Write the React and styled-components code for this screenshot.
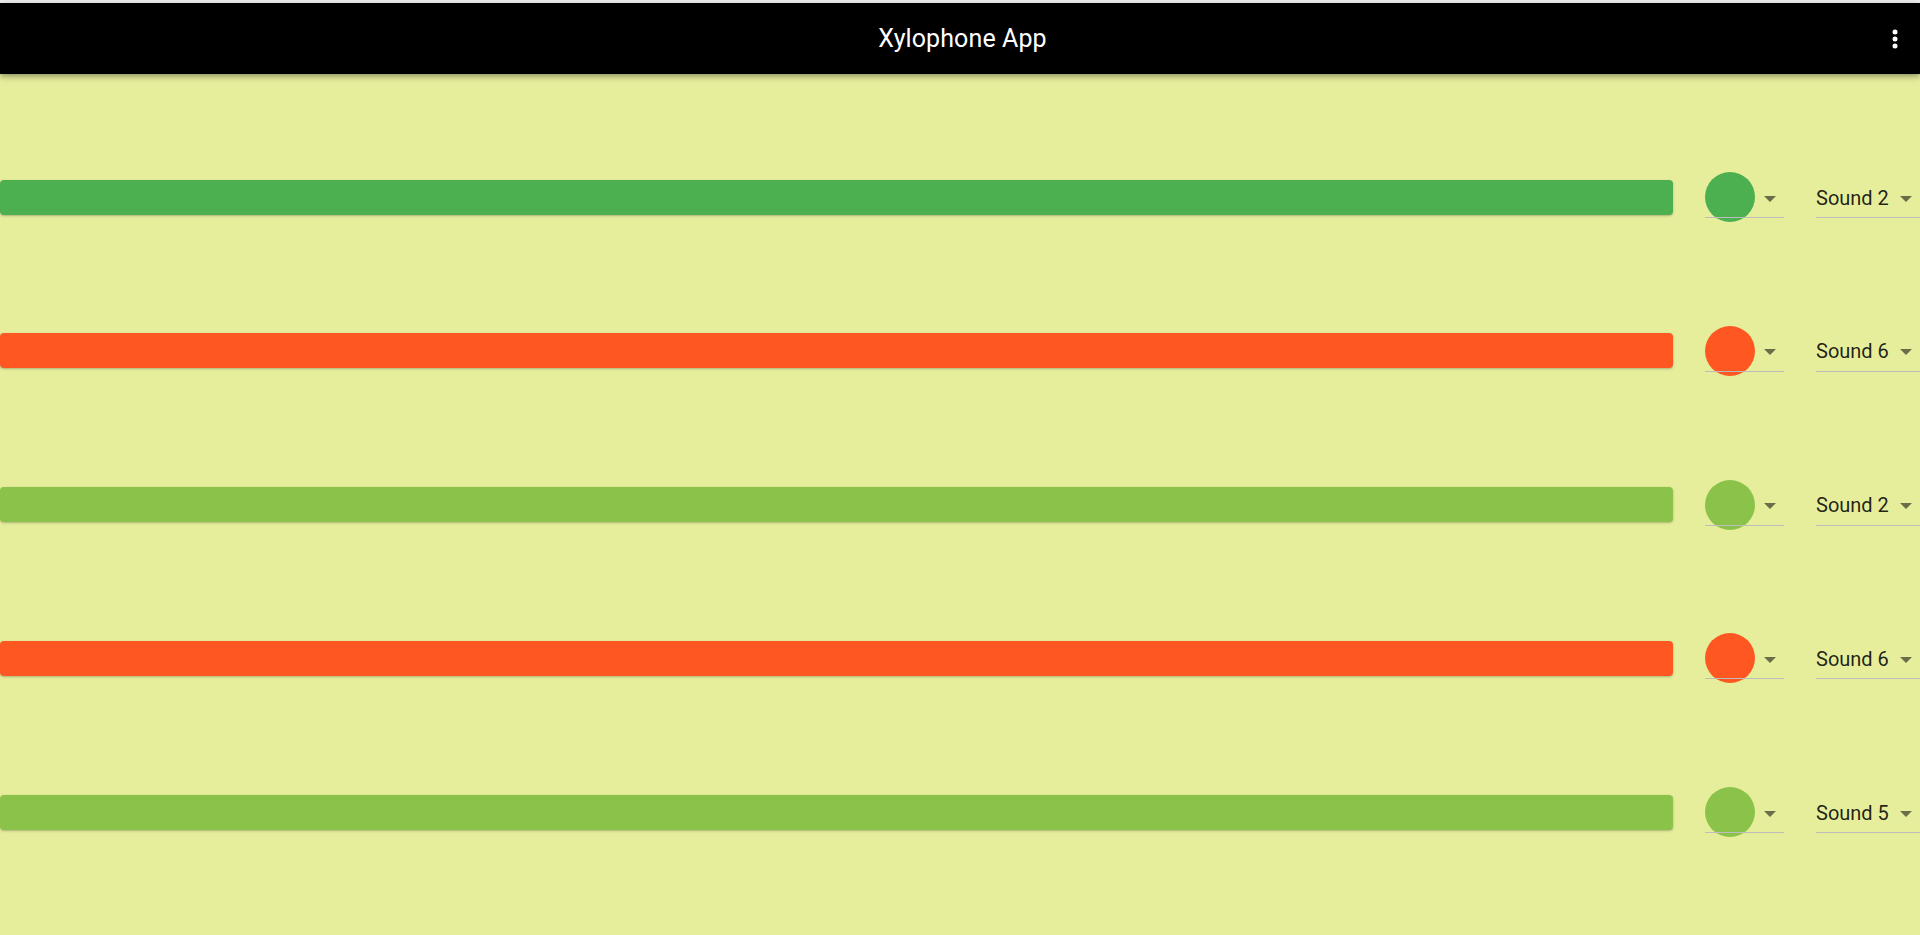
import React from "react";
import styled, { createGlobalStyle } from "styled-components";

const GlobalStyle = createGlobalStyle`
  html, body {
    margin: 0;
    padding: 0;
    background: #e6ee9c;
    overflow: hidden;
    font-family: Roboto, "Liberation Sans", Arial, sans-serif;
  }
  * { box-sizing: border-box; }
`;

const Page = styled.div`
  width: 100vw;
  height: 100vh;
  display: flex;
  flex-direction: column;
`;

const TopStrip = styled.div`
  height: 3px;
  background: #ededed;
  flex: none;
`;

const AppBar = styled.header`
  height: 71px;
  flex: none;
  background: #000;
  color: #fff;
  display: grid;
  grid-template-columns: 1fr auto 1fr;
  align-items: center;
  padding: 0 13px 0 18px;
  box-shadow: 0 2px 4px -1px rgba(0, 0, 0, 0.2), 0 4px 5px 0 rgba(0, 0, 0, 0.14),
    0 1px 10px 0 rgba(0, 0, 0, 0.12);
  position: relative;
  z-index: 2;
`;

const Title = styled.h1`
  grid-column: 2;
  margin: 0;
  font-size: 25px;
  font-weight: 400;
  letter-spacing: 0.1px;
`;

const MenuButton = styled.button`
  grid-column: 3;
  justify-self: end;
  width: 24px;
  height: 24px;
  padding: 0;
  border: 0;
  background: transparent;
  color: #fff;
  display: flex;
  align-items: center;
  justify-content: center;
  cursor: pointer;
`;

const Main = styled.main`
  flex: 1;
  display: flex;
  flex-direction: column;
  justify-content: center;
  gap: 103.75px;
`;

const Row = styled.div`
  display: grid;
  grid-template-columns: 1673px 79px 160px;
  column-gap: 32px;
  align-items: center;
  height: 50px;
`;

const Bar = styled.div`
  height: 35px;
  border-radius: 4px;
  background: ${(p) => p.$color};
  box-shadow: 0 1px 3px rgba(0, 0, 0, 0.18), 0 1px 1px rgba(0, 0, 0, 0.08);
`;

const SelectBase = styled.div`
  position: relative;
  height: 50px;
  display: flex;
  align-items: center;
  &::after {
    content: "";
    position: absolute;
    left: 0;
    right: 0;
    top: 45px;
    height: 1px;
    background: #bdbdbd;
    z-index: 1;
  }
`;

const Swatch = styled.span`
  width: 50px;
  height: 50px;
  border-radius: 50%;
  background: ${(p) => p.$color};
  flex: none;
`;

const Arrow = styled.span`
  width: 0;
  height: 0;
  border-left: 6px solid transparent;
  border-right: 6px solid transparent;
  border-top: 6px solid rgba(0, 0, 0, 0.54);
  margin-left: ${(p) => p.$gap}px;
  margin-top: 3px;
  flex: none;
`;

const SoundLabel = styled.span`
  font-size: 20px;
  line-height: 24px;
  color: rgba(0, 0, 0, 0.87);
  margin-top: 1px;
`;

const MoreIcon = () => (
  <svg width="24" height="24" viewBox="0 0 24 24" fill="currentColor">
    <circle cx="12" cy="5" r="2.5" />
    <circle cx="12" cy="12" r="2.5" />
    <circle cx="12" cy="19" r="2.5" />
  </svg>
);

const rows = [
  { color: "#4caf50", sound: "Sound 2" },
  { color: "#ff5722", sound: "Sound 6" },
  { color: "#8bc34a", sound: "Sound 2" },
  { color: "#ff5722", sound: "Sound 6" },
  { color: "#8bc34a", sound: "Sound 5" },
];

export default function App() {
  return (
    <Page>
      <GlobalStyle />
      <TopStrip />
      <AppBar>
        <Title>Xylophone App</Title>
        <MenuButton aria-label="menu">
          <MoreIcon />
        </MenuButton>
      </AppBar>
      <Main>
        {rows.map((r, i) => (
          <Row key={i}>
            <Bar $color={r.color} />
            <SelectBase>
              <Swatch $color={r.color} />
              <Arrow $gap={9} />
            </SelectBase>
            <SelectBase>
              <SoundLabel>{r.sound}</SoundLabel>
              <Arrow $gap={11} />
            </SelectBase>
          </Row>
        ))}
      </Main>
    </Page>
  );
}
